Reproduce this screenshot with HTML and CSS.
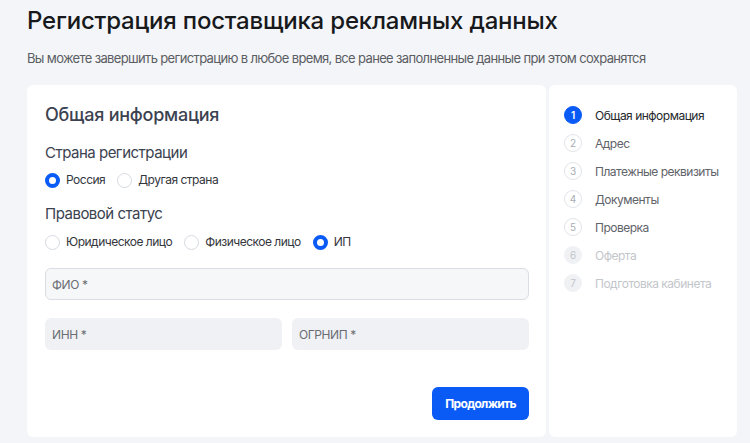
FILE: index.html
```html
<html>
  <head>
    <meta charset="utf-8">
    <link rel="stylesheet" href="styles.css">
  </head>
  <body>
    <h1 class="page-title">Регистрация поставщика рекламных данных</h1>
    <p class="page-note">Вы можете завершить регистрацию в любое время, все ранее заполненные данные при этом сохранятся</p>

    <div class="layout">
      <form class="card form">
        <h2 class="form__title">Общая информация</h2>

        <div class="form__label">Страна регистрации</div>
        <div class="radios">
          <label class="radio"><input type="radio" name="country" checked><span>Россия</span></label>
          <label class="radio"><input type="radio" name="country"><span>Другая страна</span></label>
        </div>

        <div class="form__label form__label--second">Правовой статус</div>
        <div class="radios radios--second">
          <label class="radio"><input type="radio" name="status"><span>Юридическое лицо</span></label>
          <label class="radio"><input type="radio" name="status"><span>Физическое лицо</span></label>
          <label class="radio"><input type="radio" name="status" checked><span>ИП</span></label>
        </div>

        <input class="field field--active" type="text" placeholder="ФИО *">
        <div class="form__row">
          <input class="field" type="text" placeholder="ИНН *">
          <input class="field" type="text" placeholder="ОГРНИП *">
        </div>

        <div class="form__actions">
          <button type="button" class="btn">Продолжить</button>
        </div>
      </form>

      <ol class="card steps">
        <li class="step step--current"><span class="step__num">1</span>Общая информация</li>
        <li class="step"><span class="step__num">2</span>Адрес</li>
        <li class="step"><span class="step__num">3</span>Платежные реквизиты</li>
        <li class="step"><span class="step__num">4</span>Документы</li>
        <li class="step"><span class="step__num">5</span>Проверка</li>
        <li class="step step--locked"><span class="step__num">6</span>Оферта</li>
        <li class="step step--locked"><span class="step__num">7</span>Подготовка кабинета</li>
      </ol>
    </div>
  </body>
</html>
```

FILE: styles.css
```css
body {
	margin: 0;
	padding: 6px 13px 0 27px;
	background-color: #f4f5f8;
	font-family: Inter, "Noto Sans", sans-serif;
	color: #2b2f36;
}

.page-title {
	margin: 0;
	font-size: 24px;
	line-height: 29px;
	font-weight: 500;
	letter-spacing: -0.2px;
	color: #17191c;
}

.page-note {
	margin: 15px 0 0;
	font-size: 13px;
	line-height: 16px;
	letter-spacing: -0.65px;
	color: #5a5d63;
}

.layout {
	display: flex;
	gap: 3px;
	margin-top: 19px;
}

.card {
	flex-shrink: 0;
	box-sizing: border-box;
	background-color: #fff;
	border-radius: 6px;
}

/* form */

.form {
	width: 519px;
	margin: 0;
	padding: 18px 17px 17px 18px;
}

.form__title {
	margin: 0;
	font-size: 18px;
	line-height: 24px;
	font-weight: 500;
	letter-spacing: -0.25px;
	color: #3b4250;
}

.form__label {
	margin-top: 16px;
	font-size: 15px;
	line-height: 20px;
	letter-spacing: -0.5px;
	color: #3b4250;
}

.form__label--second {
	margin-top: 16px;
}

.radios {
	display: flex;
	gap: 12px;
	margin-top: 9px;
	height: 16px;
	align-items: center;
}

.radios--second {
	margin-top: 10px;
}

.radio {
	display: flex;
	align-items: center;
	gap: 6px;
	font-size: 12px;
	line-height: 16px;
	letter-spacing: -0.5px;
	color: #33363c;
}

.radio input {
	appearance: none;
	margin: 0;
	width: 15px;
	height: 15px;
	box-sizing: border-box;
	border: 1px solid #d6dae0;
	border-radius: 50%;
	background-color: #fff;
}

.radio input:checked {
	border: 4px solid #0a5bf5;
}

.field {
	display: block;
	width: 100%;
	height: 32px;
	box-sizing: border-box;
	padding: 0 6px;
	border: 1px solid transparent;
	border-radius: 6px;
	background-color: #eff1f4;
	font-family: inherit;
	font-size: 12px;
	letter-spacing: -0.4px;
	outline: none;
}

.field::placeholder {
	color: #6a6d73;
}

.field--active {
	margin-top: 18px;
	border-color: #dadee4;
	background-color: #f6f7f9;
}

.form__row {
	display: flex;
	gap: 10px;
	margin-top: 18px;
}

.form__actions {
	display: flex;
	justify-content: flex-end;
	margin-top: 37px;
}

.btn {
	height: 33px;
	padding: 0 13px;
	border: 0;
	border-radius: 6px;
	background-color: #0a5bf5;
	color: #fff;
	font-family: inherit;
	font-size: 12px;
	font-weight: 700;
	letter-spacing: -0.7px;
}

/* steps */

.steps {
	width: 188px;
	margin: 0;
	padding: 16px 0 0 15px;
	list-style: none;
}

.step {
	display: flex;
	align-items: center;
	gap: 13px;
	height: 28px;
	font-size: 12px;
	letter-spacing: -0.5px;
	color: #5f636a;
}

.step__num {
	display: flex;
	align-items: center;
	justify-content: center;
	width: 18px;
	height: 18px;
	box-sizing: border-box;
	border: 1.5px solid #e1e4e9;
	border-radius: 50%;
	font-size: 10px;
	letter-spacing: 0;
	color: #a9adb3;
}

.step--current {
	color: #25282d;
}

.step--current .step__num {
	border-color: #0a5bf5;
	background-color: #0a5bf5;
	color: #fff;
	font-weight: 600;
}

.step--locked {
	color: #c3c6cb;
}

.step--locked .step__num {
	border-color: #f0f1f4;
	background-color: #f0f1f4;
	color: #c3c6cb;
}
```
